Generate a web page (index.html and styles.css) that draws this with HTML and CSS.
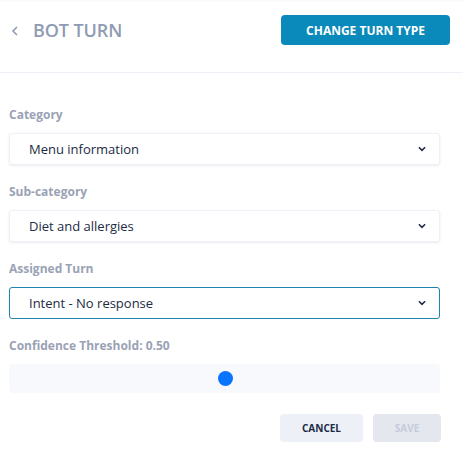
FILE: index.html
```html
<!DOCTYPE html>
<html lang="en">
<head>
    <meta charset="UTF-8">
    <meta name="viewport" content="width=device-width, initial-scale=1.0">
    <title>Bot Turn</title>
    <link rel="stylesheet" href="styles.css">
</head>
<body>
    <header class="turn-header">
        <div class="turn-title">
            <svg class="back-icon" width="8" height="10" viewBox="0 0 8 10"><path d="M6 1 L2 5 L6 9" fill="none" stroke="#8f9bb3" stroke-width="1.6"/></svg>
            <h1>BOT TURN</h1>
        </div>
        <button class="btn-primary">CHANGE TURN TYPE</button>
    </header>

    <main class="turn-form">
        <div class="field">
            <label>Category</label>
            <div class="select">
                <span>Menu information</span>
                <svg width="9" height="6" viewBox="0 0 9 6"><path d="M1 1 L4.5 4.5 L8 1" fill="none" stroke="#222b45" stroke-width="1.8"/></svg>
            </div>
        </div>

        <div class="field">
            <label>Sub-category</label>
            <div class="select">
                <span>Diet and allergies</span>
                <svg width="9" height="6" viewBox="0 0 9 6"><path d="M1 1 L4.5 4.5 L8 1" fill="none" stroke="#222b45" stroke-width="1.8"/></svg>
            </div>
        </div>

        <div class="field">
            <label>Assigned Turn</label>
            <div class="select select-active">
                <span>Intent - No response</span>
                <svg width="9" height="6" viewBox="0 0 9 6"><path d="M1 1 L4.5 4.5 L8 1" fill="none" stroke="#222b45" stroke-width="1.8"/></svg>
            </div>
        </div>

        <div class="field">
            <label>Confidence Threshold: 0.50</label>
            <div class="slider">
                <div class="slider-thumb" style="left: 50%;"></div>
            </div>
        </div>

        <div class="actions">
            <button class="btn-cancel">CANCEL</button>
            <button class="btn-save" disabled>SAVE</button>
        </div>
    </main>
</body>
</html>
```

FILE: styles.css
```css
body {
    font-family: 'Open Sans', 'Liberation Sans', sans-serif;
    background-color: #fff;
    color: #222b45;
    margin: 0;
    width: 463px;
}
.turn-header {
    display: flex;
    justify-content: space-between;
    align-items: center;
    box-sizing: border-box;
    height: 73px;
    padding: 0 13px 12px 11px;
    border-bottom: 1px solid #edf1f7;
    box-shadow: inset 0 3px 3px -2px rgba(0, 0, 0, 0.04);
}
.turn-title {
    display: flex;
    align-items: center;
    gap: 14px;
}
.back-icon {
    margin-top: 1px;
}
.turn-title h1 {
    font-size: 18px;
    font-weight: 600;
    color: #8f9bb3;
    margin: 0;
    letter-spacing: -0.1px;
}
.btn-primary {
    font-family: inherit;
    width: 169px;
    height: 30px;
    background-color: #0a8aba;
    color: #fff;
    border: none;
    border-radius: 4px;
    font-size: 12px;
    font-weight: 700;
}
.turn-form {
    padding: 34px 23px 0 9px;
    display: flex;
    flex-direction: column;
    gap: 19px;
}
.field label {
    display: block;
    font-size: 12px;
    font-weight: 700;
    line-height: 16px;
    color: #9aa2b5;
    margin-bottom: 10px;
}
.select {
    display: flex;
    justify-content: space-between;
    align-items: center;
    height: 32px;
    box-sizing: border-box;
    padding: 0 13px 0 19px;
    background-color: #fff;
    border: 1px solid #edf1f7;
    border-radius: 3px;
    box-shadow: 0 1px 3px rgba(0, 0, 0, 0.08);
    font-size: 13px;
}
.select svg {
    width: 8px;
}
.select-active {
    border-color: #1d85ad;
    box-shadow: none;
}
.slider {
    position: relative;
    height: 29px;
    background-color: #f7f9fc;
    border-radius: 4px;
}
.slider-thumb {
    position: absolute;
    top: 7px;
    width: 15px;
    height: 15px;
    margin-left: -7px;
    border-radius: 50%;
    background-color: #0a74ff;
}
.actions {
    display: flex;
    justify-content: flex-end;
    gap: 10px;
    margin-top: 2px;
    margin-right: -1px;
}
.actions button {
    font-family: inherit;
    height: 28px;
    border: none;
    border-radius: 4px;
    font-size: 10px;
    font-weight: 700;
}
.btn-cancel {
    width: 83px;
    background-color: #edf1f7;
    color: #222b45;
}
.btn-save {
    width: 68px;
    background-color: #e4e7ee;
    color: #c5cbd8;
}
```
